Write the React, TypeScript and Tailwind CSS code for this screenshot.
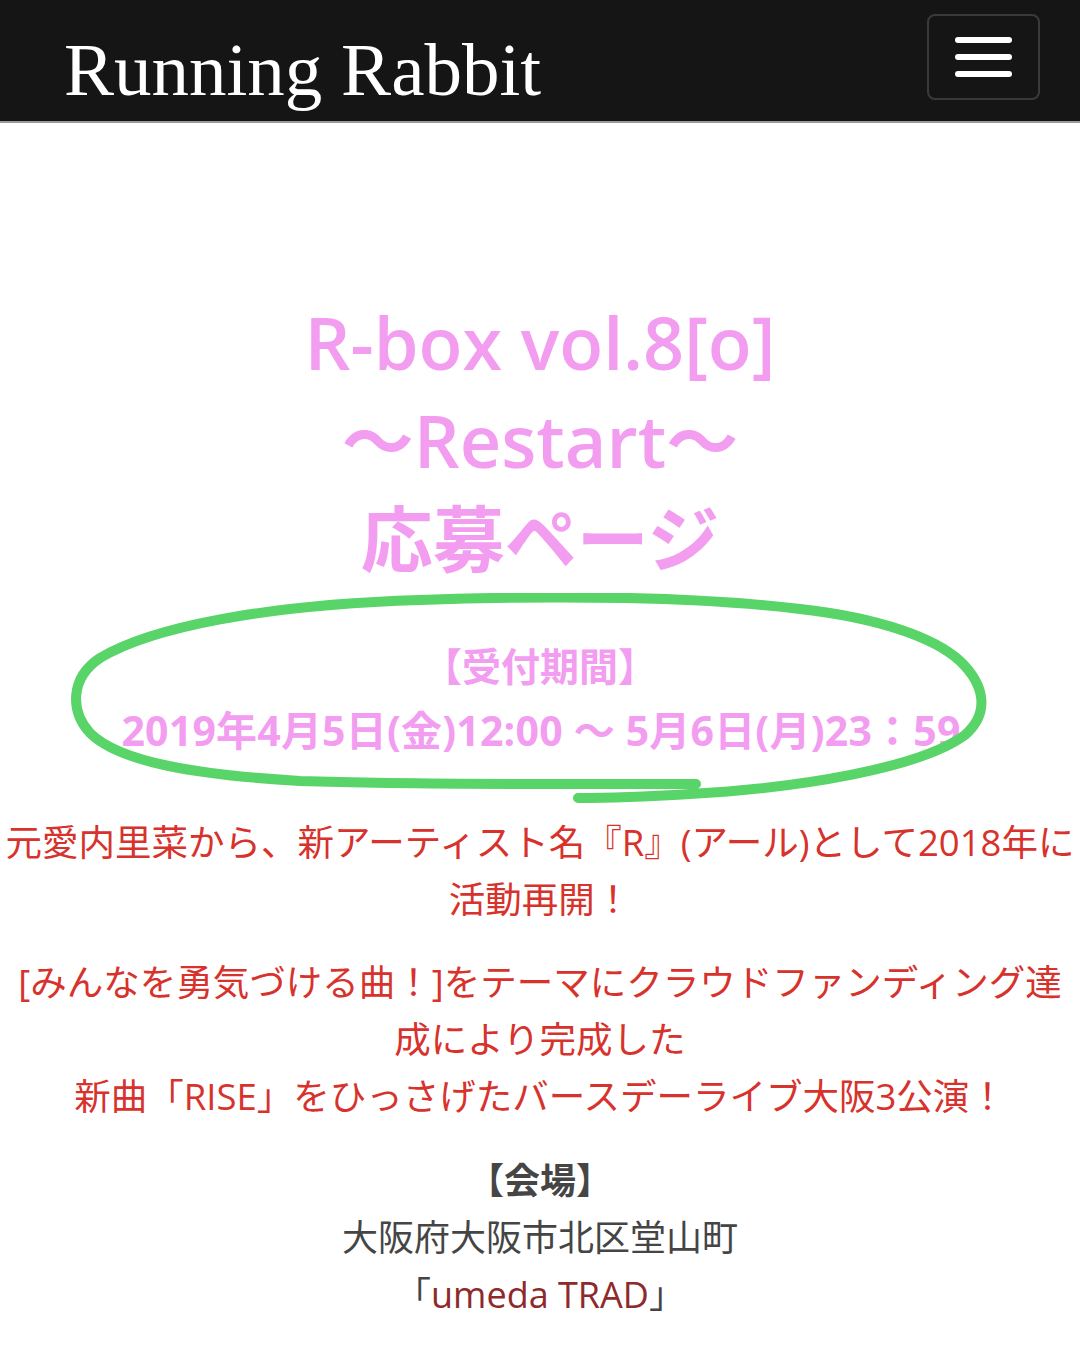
import React from 'react';

const jp = { fontFamily: '"Open Sans", "Noto Sans CJK JP", sans-serif' };

function Header() {
  return (
    <header className="h-[123px] bg-[#151515] border-b-2 border-[#9a9a9a] flex items-center justify-between pl-[64px] pr-[40px]">
      <div
        className="text-white text-[75px] leading-none pt-[18px]"
        style={{ fontFamily: '"Liberation Serif", "DejaVu Serif", serif' }}
      >
        Running Rabbit
      </div>
      <button className="w-[113px] h-[86px] mb-[8px] rounded-[8px] border-2 border-[#3a3a3a] flex flex-col items-center justify-center gap-[11px]">
        <span className="block w-[57px] h-[6px] rounded-full bg-white" />
        <span className="block w-[57px] h-[6px] rounded-full bg-white" />
        <span className="block w-[57px] h-[6px] rounded-full bg-white" />
      </button>
    </header>
  );
}

function Loop() {
  // hand drawn marker loop round the entry period
  return (
    <svg
      className="absolute left-0 top-[-40px] pointer-events-none"
      width="1080"
      height="215"
      viewBox="0 0 1080 215"
      fill="none"
    >
      <path
        d="M696 191 C560 191 420 192 300 188 C200 182 120 170 90 140 C70 118 70 85 100 65 C150 35 260 12 420 7 C560 2 700 4 800 16 C880 25 935 45 960 68 C985 92 990 120 965 142 C920 175 800 195 690 201 C640 204 600 205 578 205"
        stroke="#58d468"
        strokeWidth="10"
        strokeLinecap="round"
        strokeLinejoin="round"
      />
    </svg>
  );
}

export default function App() {
  return (
    <div className="min-h-[1349px] bg-white" style={jp}>
      <Header />
      <main className="flex flex-col items-center text-center pt-[170px]">
        <h1 className="text-[#f39df0] text-[72px] leading-[98px] font-semibold whitespace-nowrap">
          R-box vol.8[o]
          <br />
          〜Restart〜
          <br />
          応募ページ
        </h1>

        <div className="relative w-full mt-[46px] text-[#f39df0] font-bold leading-[65px] whitespace-nowrap">
          <div className="text-[39px]">【受付期間】</div>
          <div className="text-[41px] tracking-[0.2px] pl-[2px]">
            2019年4月5日(金)12:00 〜 5月6日(月)23：59
          </div>
          <Loop />
        </div>

        <p className="mt-[51px] text-[#d7322c] text-[36.5px] leading-[57px] whitespace-nowrap">
          元愛内里菜から、新アーティスト名『R』(アール)として2018年に
          <br />
          活動再開！
        </p>

        <p className="mt-[26px] text-[#d7322c] text-[36.5px] leading-[57px] whitespace-nowrap">
          [みんなを勇気づける曲！]をテーマにクラウドファンディング達
          <br />
          成により完成した
          <br />
          新曲「RISE」をひっさげたバースデーライブ大阪3公演！
        </p>

        <div className="mt-[27px] text-[#454545] text-[36px] leading-[57px] whitespace-nowrap">
          <div className="font-bold">【会場】</div>
          <div>大阪府大阪市北区堂山町</div>
          <div>
            「<span className="text-[#8e2a2c]">umeda TRAD</span>」
          </div>
        </div>
      </main>
    </div>
  );
}
